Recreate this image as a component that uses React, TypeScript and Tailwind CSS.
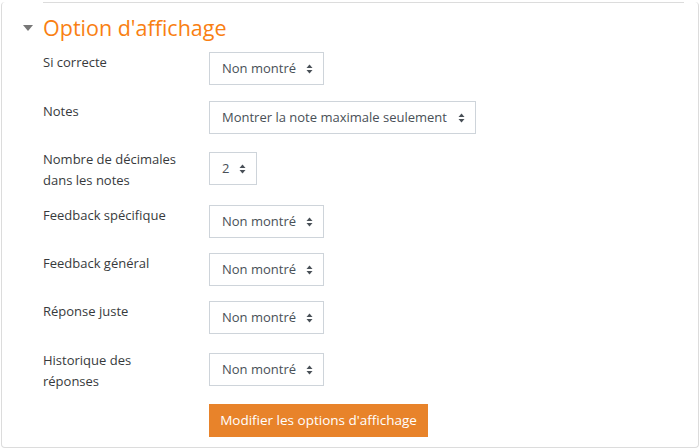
import React from "react";

const font = "font-['Open_Sans',_'Noto_Sans',_sans-serif]";

function Arrows() {
  return (
    <svg width="7" height="10" viewBox="0 0 7 10" className="shrink-0">
      <path d="M3.5 0.5 L6.5 4 L0.5 4 Z" fill="#495057" />
      <path d="M3.5 9.5 L6.5 6 L0.5 6 Z" fill="#495057" />
    </svg>
  );
}

function Select({ value, width }: { value: string; width: string }) {
  return (
    <div
      className={`${width} h-[33px] flex items-center justify-between border border-[#ced4da] bg-white pl-[12px] pr-[10px] text-[13px] text-[#495057]`}
    >
      <span className="whitespace-nowrap">{value}</span>
      <Arrows />
    </div>
  );
}

interface Row {
  label: string[];
  value: string;
  width: string;
  height: string;
}

const rows: Row[] = [
  { label: ["Si correcte"], value: "Non montré", width: "w-[115px]", height: "h-[49px]" },
  { label: ["Notes"], value: "Montrer la note maximale seulement", width: "w-[267px]", height: "h-[51px]" },
  { label: ["Nombre de décimales", "dans les notes"], value: "2", width: "w-[48px]", height: "h-[53px]" },
  { label: ["Feedback spécifique"], value: "Non montré", width: "w-[115px]", height: "h-[48px]" },
  { label: ["Feedback général"], value: "Non montré", width: "w-[115px]", height: "h-[48px]" },
  { label: ["Réponse juste"], value: "Non montré", width: "w-[115px]", height: "h-[52px]" },
  { label: ["Historique des", "réponses"], value: "Non montré", width: "w-[115px]", height: "h-[51px]" },
];

export default function App() {
  return (
    <div className={`w-[700px] h-[448px] bg-white p-px ${font}`}>
      <div className="h-full rounded-[4px] border border-t-0 border-[#dcdcdc]">
        {/* top rule */}
        <div className="ml-[41px] mr-[14px] mt-px border-t border-[#dcdcdc]" />

        {/* legend */}
        <div className="flex items-center h-[44px] pt-[6px]">
          <svg width="10" height="6" viewBox="0 0 10 6" className="ml-[21px] mr-[10px]">
            <path d="M0 0 L10 0 L5 6 Z" fill="#777" />
          </svg>
          <h3 className="text-[21.5px] leading-none text-[#f98012] font-normal">Option d'affichage</h3>
        </div>

        <div className="pl-[41px] pt-[5px]">
          {rows.map((r) => (
            <div key={r.label.join(" ")} className={`flex items-start ${r.height}`}>
              <div
                className={`w-[166px] text-[13px] leading-[21px] text-[#373a3c] ${
                  r.label.length > 1 ? "-mt-[3px]" : ""
                }`}
              >
                {r.label.map((l) => (
                  <div key={l}>{l}</div>
                ))}
              </div>
              <Select value={r.value} width={r.width} />
            </div>
          ))}
          <div className="flex">
            <div className="w-[166px]" />
            <button className="h-[33px] w-[219px] bg-[#e8832a] text-white text-[13.5px] whitespace-nowrap">
              Modifier les options d'affichage
            </button>
          </div>
        </div>
      </div>
    </div>
  );
}
